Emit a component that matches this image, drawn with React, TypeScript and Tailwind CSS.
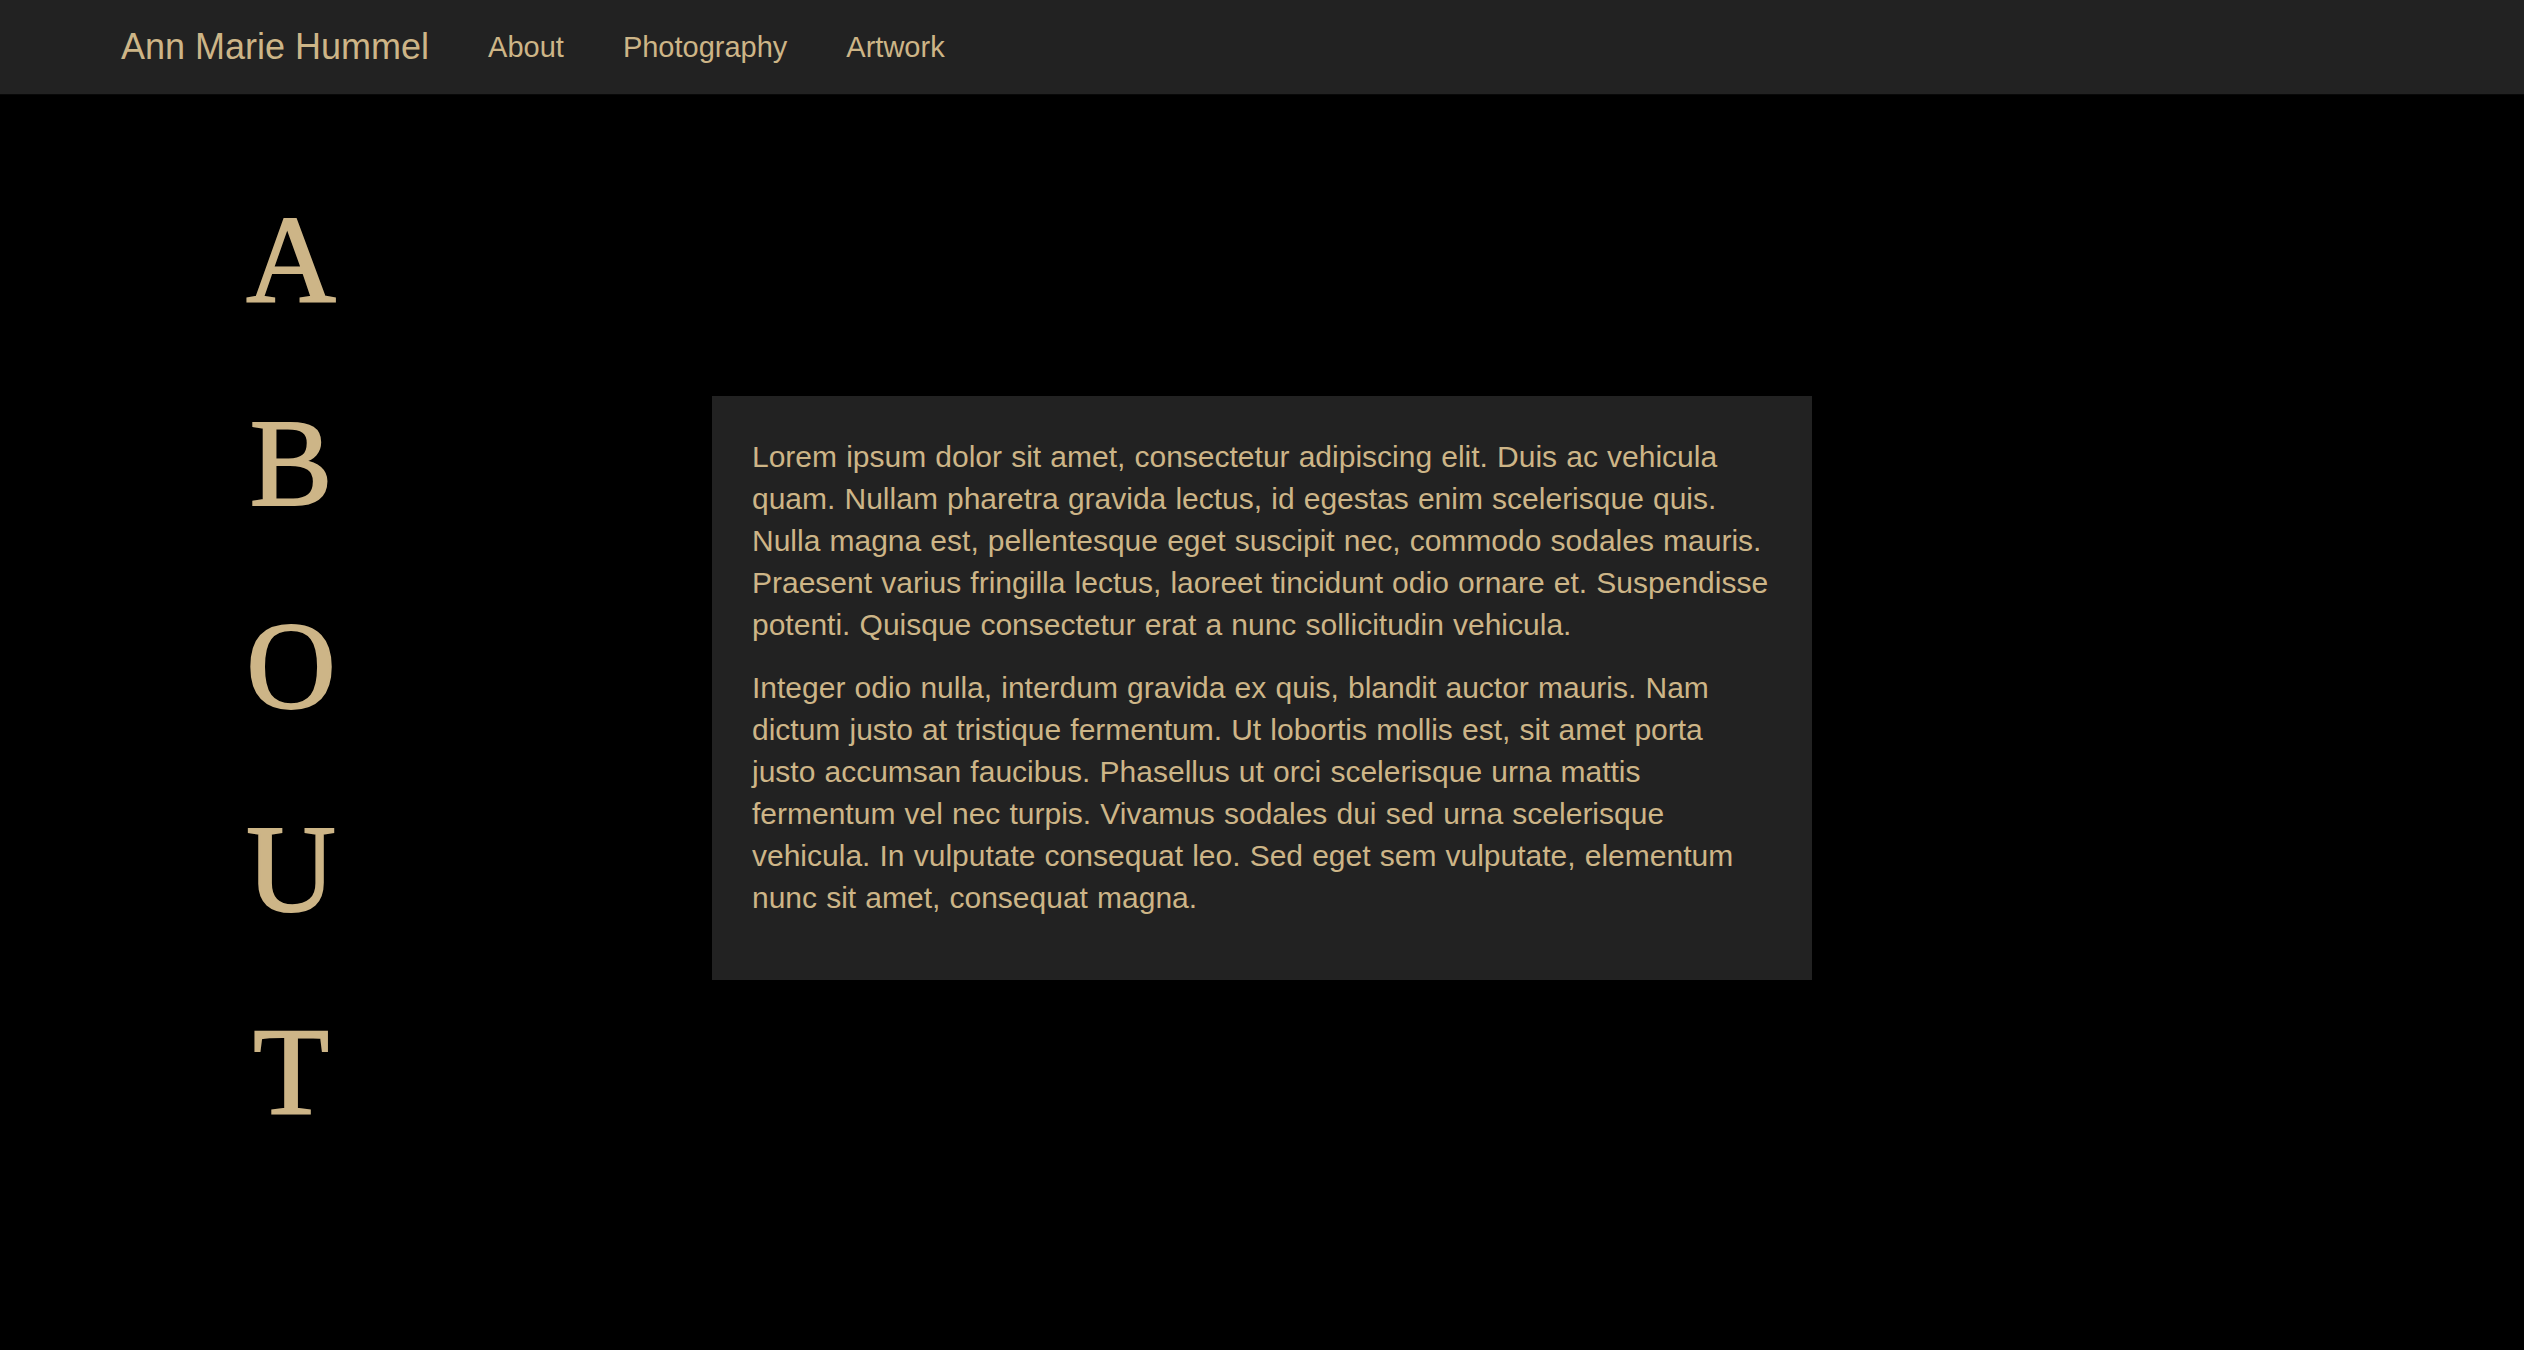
import React from 'react';

const letters = ['A', 'B', 'O', 'U', 'T'];

const paragraphs = [
  'Lorem ipsum dolor sit amet, consectetur adipiscing elit. Duis ac vehicula quam. Nullam pharetra gravida lectus, id egestas enim scelerisque quis. Nulla magna est, pellentesque eget suscipit nec, commodo sodales mauris. Praesent varius fringilla lectus, laoreet tincidunt odio ornare et. Suspendisse potenti. Quisque consectetur erat a nunc sollicitudin vehicula.',
  'Integer odio nulla, interdum gravida ex quis, blandit auctor mauris. Nam dictum justo at tristique fermentum. Ut lobortis mollis est, sit amet porta justo accumsan faucibus. Phasellus ut orci scelerisque urna mattis fermentum vel nec turpis. Vivamus sodales dui sed urna scelerisque vehicula. In vulputate consequat leo. Sed eget sem vulputate, elementum nunc sit amet, consequat magna.',
];

export default function App() {
  return (
    <div className="min-h-[1350px] bg-black text-[#cdb587] font-['Liberation_Sans',Arial,sans-serif]">
      {/* Navbar */}
      <nav className="h-[95px] bg-[#222222] border-b border-[#080808] flex items-center pl-[121px]">
        <a className="text-[36px] leading-none mr-[59px]">Ann Marie Hummel</a>
        <div className="flex items-center gap-[59px] text-[29px] leading-none">
          <a>About</a>
          <a>Photography</a>
          <a>Artwork</a>
        </div>
      </nav>

      {/* Content */}
      <div className="grid grid-cols-[1fr_1100px_1fr] pt-[64px]">
        <div>
          <div className="ml-[231px] w-[120px] flex flex-col items-center font-['Liberation_Serif','Times_New_Roman',serif] text-[124px] leading-[203px] [-webkit-text-stroke:2px_#cdb587]">
            {letters.map(l => (
              <span key={l}>{l}</span>
            ))}
          </div>
        </div>

        <div className="self-start mt-[237px] bg-[#222222] px-[40px] pt-[40px] pb-[40px]">
          {paragraphs.map((p, i) => (
            <p key={i} className="text-[30px] leading-[42px] mb-[21px] [word-spacing:0.8px]">
              {p}
            </p>
          ))}
        </div>

        <div />
      </div>
    </div>
  );
}
